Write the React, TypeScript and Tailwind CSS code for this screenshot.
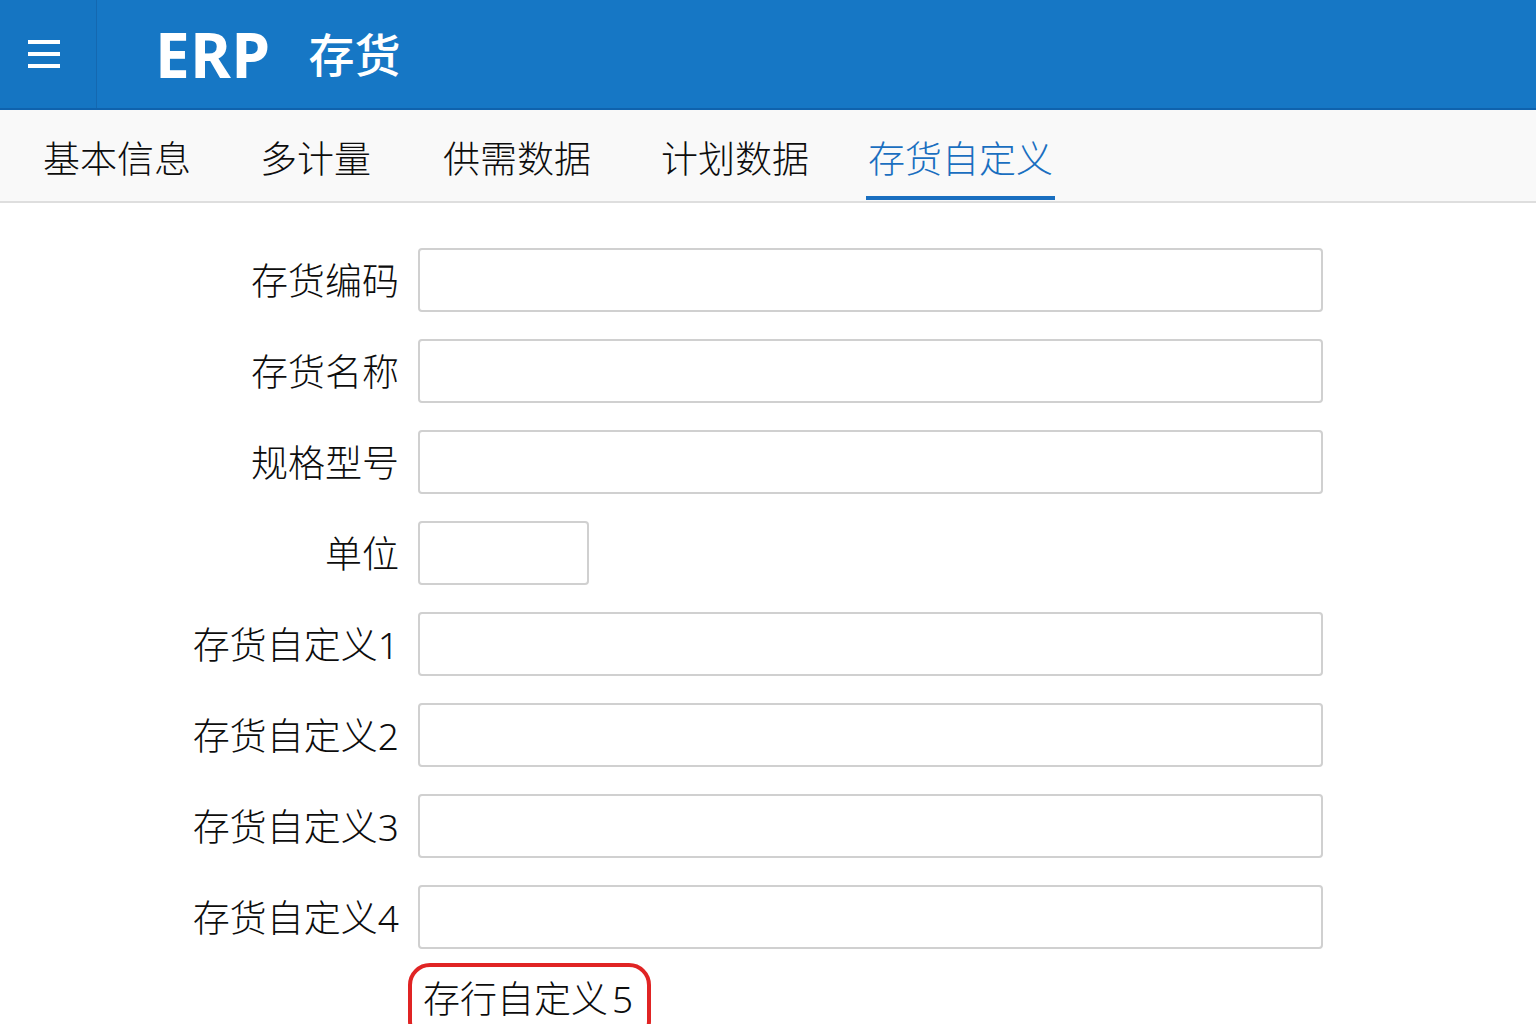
import React from "react";

const font = { fontFamily: '"Noto Sans", "Noto Sans CJK SC", sans-serif' };

const rows: { label: string; short?: boolean }[] = [
  { label: "存货编码" },
  { label: "存货名称" },
  { label: "规格型号" },
  { label: "单位", short: true },
  { label: "存货自定义1" },
  { label: "存货自定义2" },
  { label: "存货自定义3" },
  { label: "存货自定义4" },
];

export default function App() {
  return (
    <div
      className="w-[1536px] h-[1024px] overflow-hidden bg-white text-[#0d0d0d]"
      style={font}
    >
      {/* Header */}
      <div className="flex h-[110px] bg-[#1677c5] border-b-2 border-[#0f62ad]">
        <div className="w-[97px] flex items-center pl-[28px] border-r border-[#1468b0] bg-[#1575c2]">
          <div className="flex flex-col gap-[8px] w-[32px]">
            <div className="h-[4px] bg-white" />
            <div className="h-[4px] bg-white" />
            <div className="h-[4px] bg-white" />
          </div>
        </div>
        <div className="flex items-center pl-[58px] text-white">
          <span className="text-[62px] font-bold leading-none tracking-[0.5px]">ERP</span>
          <span className="ml-[38px] text-[46px] font-medium leading-none">存货</span>
        </div>
      </div>

      {/* Tabs */}
      <div className="flex h-[93px] bg-[#f9f9f9] border-b-2 border-[#dedede] text-[37px] font-light leading-none">
        <div className="ml-[43px] flex items-center pt-[5px]">基本信息</div>
        <div className="ml-[69px] flex items-center pt-[5px]">多计量</div>
        <div className="ml-[72px] flex items-center pt-[5px]">供需数据</div>
        <div className="ml-[70px] flex items-center pt-[5px]">计划数据</div>
        <div className="ml-[57px] relative flex items-center px-[2px] pt-[5px] text-[#1a6fc0]">
          存货自定义
          <div className="absolute left-0 right-0 bottom-[1px] h-[4px] bg-[#1a6fc0]" />
        </div>
      </div>

      {/* Form */}
      <div className="flex flex-col gap-[27px] pt-[45px] font-light">
        {rows.map((r) => (
          <div key={r.label} className="flex items-center">
            <div className="w-[399px] text-right text-[37px] leading-none">{r.label}</div>
            <div
              className={`ml-[19px] h-[64px] rounded-[4px] border-2 border-[#d0d0d0] bg-white ${
                r.short ? "w-[171px]" : "w-[905px]"
              }`}
            />
          </div>
        ))}
        <div className="flex -mt-[13px]">
          <div className="ml-[408px] h-[80px] w-[243px] rounded-[22px] border-4 border-[#e02424] pl-[11px] pt-[13px] text-[37px] leading-none">
            存行自定义<span className="ml-[4px]">5</span>
          </div>
        </div>
      </div>
    </div>
  );
}
